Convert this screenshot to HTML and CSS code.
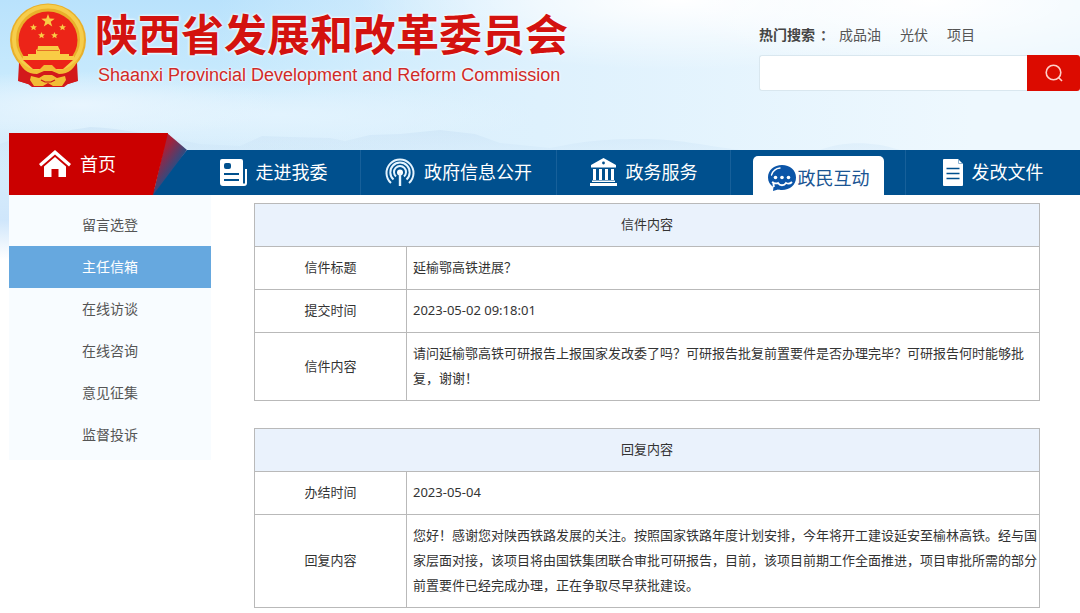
FILE: index.html
```html
<!DOCTYPE html>
<html lang="zh-CN">
<head>
<meta charset="utf-8">
<title>陕西省发展和改革委员会</title>
<link rel="stylesheet" href="styles.css">
</head>
<body>
<div class="page">
  <svg class="hills" viewBox="0 0 1080 50" preserveAspectRatio="none" aria-hidden="true">
    <defs><linearGradient id="haze" x1="0" y1="0" x2="0" y2="1"><stop offset="0" stop-color="#c3ddf3" stop-opacity=".45"/><stop offset="1" stop-color="#d5eafa" stop-opacity=".15"/></linearGradient></defs>
    <path fill="url(#haze)" d="M0 24C30 12 50 14 90 7 115 8 135 12 160 16L200 24 240 26 262 16 290 17 330 18 345 21 370 15 400 14 440 10 475 14 500 23 550 28C580 22 600 19 640 19 680 19 700 25 740 30H820C840 22 870 20 900 30L1080 40V50H0Z"/>
  </svg>
  <header class="header">
    <div class="brand">
      <svg class="emblem" viewBox="0 0 78 84" aria-hidden="true">
        <path fill="#d3191b" d="M12 56 10 78l9 3 4 3h32l4-3 9-3-3-22z"/>
        <ellipse cx="39" cy="37" rx="38" ry="36.500" fill="#e9b02a"/>
        <ellipse cx="39" cy="36.500" rx="34" ry="33" fill="none" stroke="#f6cd4b" stroke-width="4"/>
        <ellipse cx="39" cy="37" rx="29.500" ry="28.500" fill="#ec2418"/>
        <g fill="#f9cc45">
          <path d="M39 11l1.700 4.600 5 .1-4 3.100 1.500 4.800-4.200-2.800-4.200 2.800 1.500-4.800-4-3.100 5-.1z"/>
          <path d="M24.500 21l1 2.200 2.400.1-1.800 1.600.6 2.400-2.200-1.300-2.100 1.300.6-2.400-1.900-1.600 2.400-.1zM53.500 21l1 2.200 2.400.1-1.800 1.600.6 2.400-2.200-1.300-2.100 1.300.6-2.400-1.900-1.600 2.400-.1zM32.500 29l1 2.200 2.400.1-1.800 1.600.6 2.400-2.200-1.300-2.100 1.300.6-2.400-1.900-1.600 2.400-.1zM45.500 29l1 2.200 2.400.1-1.800 1.600.6 2.400-2.200-1.300-2.100 1.300.6-2.400-1.900-1.600 2.400-.1z"/>
          <path d="M29 43h20l1.500 3.500H51V51h9v2h5v4H14v-4h5v-2h8v-4.500h1.500z"/>
        </g>
        <path stroke="#e05a20" stroke-width=".8" d="M28 47.500h22"/>
        <path fill="#ec2418" d="M14 57h50L54 66H24z"/>
        <path fill="#d3191b" d="M10 60l16 9 13-2 13 2 16-9 1 18-10 3H19L9 78z"/>
        <path fill="#f2bd35" d="M9 56c7 8 14 11 21 11l5-5h8l5 5c7 0 14-3 21-11-3 9-9 15-19 15l-7-3h-8l-7 3C18 71 12 65 9 56z"/>
        <path fill="#d3191b" d="M30 73l9-3 9 3-3 5H33z"/>
        <path fill="#f2bd35" d="M22 73l8 2 5-3h8l5 3 8-2 1 4-4 6h-9l-5-3-5 3h-9l-4-6z"/>
        <path stroke="#c8141a" stroke-width="1.200" fill="none" d="M32 77l4 2h6l4-2"/>
      </svg>
      <div>
        <h1 class="brand-name">陕西省发展和改革委员会</h1>
        <p class="brand-en">Shaanxi Provincial Development and Reform Commission</p>
      </div>
    </div>
    <div class="search">
      <div class="hot"><label class="hot-label" for="q">热门搜索</label><span class="hot-colon">：</span>
        <a href="#">成品油</a><a href="#">光伏</a><a href="#">项目</a></div>
      <form class="search-form">
        <input class="search-input" id="q" type="text">
        <button class="search-button" type="button" aria-label="搜索">
          <svg width="18" height="18" viewBox="0 0 18 18" fill="none" stroke="#ffd0c8" stroke-width="1.600"><circle cx="8.500" cy="8.500" r="7.300"/><path d="M13.500 13.500l3.500 3.500"/></svg>
        </button>
      </form>
    </div>
  </header>

  <nav class="nav">
    <a class="home" href="#">
      <svg class="home-shape" viewBox="0 0 178 62" preserveAspectRatio="none" aria-hidden="true">
        <defs><linearGradient id="fold" gradientUnits="userSpaceOnUse" x1="154" y1="18" x2="170" y2="29"><stop offset="0" stop-color="#a5213a"/><stop offset="1" stop-color="#2c4c83"/></linearGradient></defs>
        <path fill="#00508e" d="M178 17V62H140z"/>
        <path fill="url(#fold)" d="M158 0L178 17 144 62z"/>
        <path fill="#cb0000" d="M0 0H159L144 62H0z"/>
      </svg>
      <svg class="icon" width="32" height="28" viewBox="0 0 32 28" fill="#fff"><path d="M16 0l16 14-2 2.600L16 4.600 2 16.600 0 14zM16 7l11 9.500V27h-7.500v-8h-7v8H5V16.500z"/></svg>
      <span>首页</span>
    </a>
    <a class="item" href="#">
      <svg class="icon" width="27" height="27" viewBox="0 0 27 27"><path fill="#fff" d="M2 0h19q2 0 2 2v22.500h2V10h2v14q0 3-3 3H3q-3 0-3-3V2q0-2 2-2z"/><rect x="4" y="4" width="7" height="6" rx="2" fill="#00508e"/><path fill="#00508e" d="M4 14h15v2H4zM4 20h15v2H4z"/></svg>
      <span>走进我委</span>
    </a>
    <a class="item" href="#">
      <svg class="icon" width="30" height="28" viewBox="0 0 30 28" fill="none" stroke="#e4f4ff" stroke-width="2"><path d="M6 25A13.500 13.500 0 1 1 24 25M8.500 21.500A9.700 9.700 0 1 1 21.500 21.500M11 18.500A6 6 0 1 1 19 18.500"/><circle cx="15" cy="14.500" r="3" fill="#fff" stroke="none"/><path stroke-width="2.400" d="M15 15v13"/></svg>
      <span>政府信息公开</span>
    </a>
    <a class="item" href="#">
      <svg class="icon" width="27" height="28" viewBox="0 0 27 28" fill="#fff"><path d="M13.500 0L26 7v2.500H1V7zM3 11h3v11H3zM9 11h3v11H9zM15 11h3v11h-3zM21 11h3v11h-3zM2 22.500h23v1.500H2zM0 25h27v3H0z"/><circle cx="13.500" cy="5" r="1.400" fill="#00508e"/></svg>
      <span>政务服务</span>
    </a>
    <a class="item" href="#" aria-current="page">
      <span class="active">
        <svg width="28" height="26" viewBox="0 0 28 26"><path fill="#0b55a8" d="M14 0c8 0 14 5 14 12.500S22 25 14 25c-2 0-3-.2-4-.5L5 26l.5-4C2 20 0 16.500 0 12.500 0 5 6 0 14 0z"/><path fill="none" stroke="#fff" stroke-width="1.400" stroke-linecap="round" d="M3.500 10C5 5.500 8.500 3.300 12 3"/><path fill="none" stroke="#fff" stroke-width="1.800" d="M4 17c3 2 4 2 6 1 2 3 6 3 8 0 2 1 4 1 6-1M5 17l1 5"/><g fill="#fff"><circle cx="7.500" cy="12.500" r="1.800"/><circle cx="14" cy="12.500" r="1.800"/><circle cx="20.500" cy="12.500" r="1.800"/></g></svg>
        <span>政民互动</span>
      </span>
    </a>
    <a class="item" href="#">
      <svg class="icon" width="20" height="27" viewBox="0 0 20 27"><path fill="#fff" d="M1 0h14l5 5v21q0 1-1 1H1q-1 0-1-1V1q0-1 1-1z"/><path stroke="#00508e" stroke-width="1.500" fill="none" d="M3.500 9.500h13M3.500 14.500h13M3.500 19.500h13"/><path stroke="#8fb4d2" fill="none" d="M15.500 1v3.500H19"/></svg>
      <span>发改文件</span>
    </a>
  </nav>

  <div class="body">
    <aside class="side">
      <a href="#">留言选登</a>
      <a class="selected" href="#">主任信箱</a>
      <a href="#">在线访谈</a>
      <a href="#">在线咨询</a>
      <a href="#">意见征集</a>
      <a href="#">监督投诉</a>
    </aside>
    <main class="main">
      <table class="letter">
        <thead><tr><th colspan="2">信件内容</th></tr></thead>
        <tbody>
          <tr><th scope="row">信件标题</th><td>延榆鄂高铁进展？</td></tr>
          <tr><th scope="row">提交时间</th><td>2023-05-02 09:18:01</td></tr>
          <tr><th scope="row">信件内容</th><td>请问延榆鄂高铁可研报告上报国家发改委了吗？可研报告批复前置要件是否办理完毕？可研报告何时能够批复，谢谢！</td></tr>
        </tbody>
      </table>
      <table class="letter">
        <thead><tr><th colspan="2">回复内容</th></tr></thead>
        <tbody>
          <tr><th scope="row">办结时间</th><td>2023-05-04</td></tr>
          <tr><th scope="row">回复内容</th><td>您好！感谢您对陕西铁路发展的关注。按照国家铁路年度计划安排，今年将开工建设延安至榆林高铁。经与国家层面对接，该项目将由国铁集团联合审批可研报告，目前，该项目前期工作全面推进，项目审批所需的部分前置要件已经完成办理，正在争取尽早获批建设。</td></tr>
        </tbody>
      </table>
    </main>
  </div>
</div>
</body>
</html>
```
FILE: styles.css
```css
* {
  box-sizing: border-box;
}

body {
  margin: 0;
  background: #fff;
  color: #333;
  font-family: "Noto Sans", "Noto Sans CJK SC", sans-serif;
  font-size: 13px;
}

a {
  color: inherit;
  text-decoration: none;
}

.page {
  position: relative;
  padding-left: 9px;
  background:
    radial-gradient(ellipse 260px 70px at 930px 0, #fff, transparent),
    radial-gradient(ellipse 320px 70px at 680px 0, #fff, transparent),
    radial-gradient(ellipse 200px 34px at 80px 105px, #e8f5fe, transparent),
    radial-gradient(ellipse 260px 34px at 280px 115px, #e2f3fe, transparent),
    linear-gradient(90deg, transparent 20%, #def1fd 50%, #eef8fe 90%) 0 0 / 100% 195px no-repeat,
    linear-gradient(180deg, #b9e2fc 0, #c6e9fd 70px, #d9effc 120px, #d3eafb 190px, #cfe6fb 220px, #fff 260px);
}

.hills {
  position: absolute;
  left: 0;
  top: 120px;
  width: 100%;
  height: 50px;
}

.header {
  position: relative;
  display: flex;
  justify-content: space-between;
  height: 133px;
}

.brand {
  display: flex;
  align-items: flex-start;
  gap: 8px;
  padding-top: 3px;
}

.emblem {
  width: 78px;
  height: 84px;
}

.brand-name {
  margin: 0;
  padding-top: 8px;
  color: #d3120f;
  font-size: 43px;
  font-weight: 700;
  line-height: 48px;
  text-shadow: 0 0 3px #fff, 0 0 3px #fff;
}

.brand-en {
  margin: 0;
  padding: 4px 3px;
  color: #d02a28;
  font-family: "Liberation Sans", sans-serif;
  font-size: 18px;
  line-height: 24px;
  text-shadow: 0 0 3px #fff, 0 0 2px #fff;
}

.search {
  width: 321px;
  padding-top: 24px;
}

.hot {
  display: flex;
  gap: 19px;
  color: #555;
  font-size: 14px;
  line-height: 22px;
}

.hot-label {
  color: #444;
  font-weight: 700;
}

.hot-colon {
  margin: 0 -14px;
  font-weight: 700;
}

.search-form {
  display: flex;
  height: 36px;
  margin-top: 9px;
}

.search-input {
  flex: 1;
  min-width: 0;
  border: 1px solid #d9e7ef;
  border-right: 0;
  border-radius: 3px 0 0 3px;
  background: #fff;
}

.search-button {
  display: grid;
  width: 53px;
  padding: 0;
  place-items: center;
  border: 0;
  border-radius: 0 3px 3px 0;
  background: #dc0b00;
}

.nav {
  position: relative;
  display: grid;
  grid-template-columns: 178fr 174fr 196fr 174fr 175fr 174fr;
  align-items: end;
  color: #fff;
  font-size: 18px;
  line-height: 26px;
}

.home {
  position: relative;
  display: flex;
  align-items: center;
  gap: 9px;
  height: 62px;
  padding-left: 30px;
}

.home-shape {
  position: absolute;
  inset: 0;
  width: 100%;
  height: 100%;
}

.home .icon,
.home span {
  position: relative;
}

.item {
  display: flex;
  align-items: center;
  justify-content: center;
  gap: 9px;
  height: 45px;
  padding-bottom: 1px;
  border-right: 1px solid #17609a;
  background: #00508e;
}

.item:has(.active) {
  padding-bottom: 0;
}

.item:last-child {
  border-right: 0;
}

.active {
  display: flex;
  align-items: center;
  align-self: flex-end;
  gap: 2px;
  height: 39px;
  padding: 4px 14px 0 15px;
  border-radius: 5px 5px 0 0;
  background: #fff;
  color: #1b5593;
}

.body {
  position: relative;
  display: flex;
  align-items: flex-start;
  gap: 43px;
  padding: 0 40px 5px 0;
  background: #fff;
}

.side {
  display: flex;
  flex: 0 0 202px;
  flex-direction: column;
  padding: 9px 0 4px;
  background: #f8fcff;
  color: #555;
  font-size: 14px;
  line-height: 42px;
  text-align: center;
}

.side .selected {
  background: #66a8df;
  color: #fff;
}

.main {
  display: flex;
  flex: 1;
  flex-direction: column;
  gap: 27px;
  padding-top: 8px;
}

.letter {
  width: 100%;
  border-collapse: collapse;
  line-height: 25px;
}

.letter th,
.letter td {
  padding: 8px 2px 9px 6px;
  border: 1px solid #b9b9b9;
  font-weight: 400;
  text-align: left;
}

.letter th {
  width: 152px;
  padding-left: 2px;
  text-align: center;
}

.letter thead th {
  background: #eaf2fc;
}
```
